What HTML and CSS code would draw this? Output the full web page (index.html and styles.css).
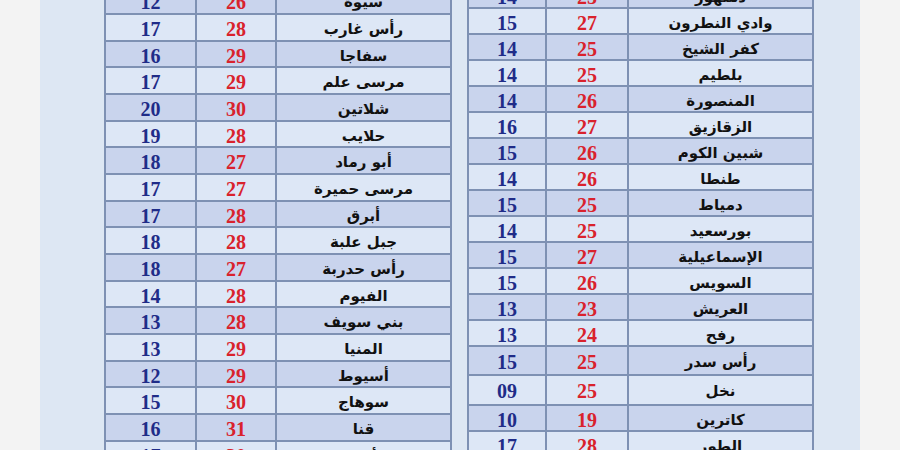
FILE: index.html
```html
<!DOCTYPE html>
<html lang="ar">
<head>
<meta charset="utf-8">
<link rel="stylesheet" href="styles.css">
</head>
<body>
<div class="panel">
  <div class="tbl tbl-left" dir="rtl">
    <div class="row dark"><div class="name">سيوة</div><div class="hi">26</div><div class="lo">12</div></div>
    <div class="row light"><div class="name">رأس غارب</div><div class="hi">28</div><div class="lo">17</div></div>
    <div class="row dark"><div class="name">سفاجا</div><div class="hi">29</div><div class="lo">16</div></div>
    <div class="row light"><div class="name">مرسى علم</div><div class="hi">29</div><div class="lo">17</div></div>
    <div class="row dark"><div class="name">شلاتين</div><div class="hi">30</div><div class="lo">20</div></div>
    <div class="row light"><div class="name">حلايب</div><div class="hi">28</div><div class="lo">19</div></div>
    <div class="row dark"><div class="name">أبو رماد</div><div class="hi">27</div><div class="lo">18</div></div>
    <div class="row light"><div class="name">مرسى حميرة</div><div class="hi">27</div><div class="lo">17</div></div>
    <div class="row dark"><div class="name">أبرق</div><div class="hi">28</div><div class="lo">17</div></div>
    <div class="row light"><div class="name">جبل علبة</div><div class="hi">28</div><div class="lo">18</div></div>
    <div class="row dark"><div class="name">رأس حدربة</div><div class="hi">27</div><div class="lo">18</div></div>
    <div class="row light"><div class="name">الفيوم</div><div class="hi">28</div><div class="lo">14</div></div>
    <div class="row dark"><div class="name">بني سويف</div><div class="hi">28</div><div class="lo">13</div></div>
    <div class="row light"><div class="name">المنيا</div><div class="hi">29</div><div class="lo">13</div></div>
    <div class="row dark"><div class="name">أسيوط</div><div class="hi">29</div><div class="lo">12</div></div>
    <div class="row light"><div class="name">سوهاج</div><div class="hi">30</div><div class="lo">15</div></div>
    <div class="row dark"><div class="name">قنا</div><div class="hi">31</div><div class="lo">16</div></div>
    <div class="row light"><div class="name">الأقصر</div><div class="hi">30</div><div class="lo">17</div></div>
  </div>
  <div class="tbl tbl-right" dir="rtl">
    <div class="row dark"><div class="name">دمنهور</div><div class="hi">25</div><div class="lo">14</div></div>
    <div class="row light"><div class="name">وادي النطرون</div><div class="hi">27</div><div class="lo">15</div></div>
    <div class="row dark"><div class="name">كفر الشيخ</div><div class="hi">25</div><div class="lo">14</div></div>
    <div class="row light"><div class="name">بلطيم</div><div class="hi">25</div><div class="lo">14</div></div>
    <div class="row dark"><div class="name">المنصورة</div><div class="hi">26</div><div class="lo">14</div></div>
    <div class="row light"><div class="name">الزقازيق</div><div class="hi">27</div><div class="lo">16</div></div>
    <div class="row dark"><div class="name">شبين الكوم</div><div class="hi">26</div><div class="lo">15</div></div>
    <div class="row light"><div class="name">طنطا</div><div class="hi">26</div><div class="lo">14</div></div>
    <div class="row dark"><div class="name">دمياط</div><div class="hi">25</div><div class="lo">15</div></div>
    <div class="row light"><div class="name">بورسعيد</div><div class="hi">25</div><div class="lo">14</div></div>
    <div class="row dark"><div class="name">الإسماعيلية</div><div class="hi">27</div><div class="lo">15</div></div>
    <div class="row light"><div class="name">السويس</div><div class="hi">26</div><div class="lo">15</div></div>
    <div class="row dark"><div class="name">العريش</div><div class="hi">23</div><div class="lo">13</div></div>
    <div class="row light"><div class="name">رفح</div><div class="hi">24</div><div class="lo">13</div></div>
    <div class="row dark tall29"><div class="name">رأس سدر</div><div class="hi">25</div><div class="lo">15</div></div>
    <div class="row light tall30"><div class="name">نخل</div><div class="hi">25</div><div class="lo">09</div></div>
    <div class="row dark"><div class="name">كاترين</div><div class="hi">19</div><div class="lo">10</div></div>
    <div class="row light"><div class="name">الطور</div><div class="hi">28</div><div class="lo">17</div></div>
  </div>
</div>
</body>
</html>
```
FILE: styles.css
```css
html, body {
  margin: 0;
  padding: 0;
  background: #f3f3f3;
  height: 450px;
  overflow: hidden;
}

.panel {
  margin-left: 40px;
  width: 820px;
  height: 450px;
  background: #dde7f3;
  display: flex;
  align-items: flex-start;
  gap: 15px;
  padding-left: 64px;
  box-sizing: border-box;
  overflow: hidden;
}

.tbl {
  border-left: 2px solid #7e91b3;
  border-right: 2px solid #7e91b3;
  flex: none;
}

.tbl-left {
  margin-top: -11.67px;
}

.tbl-right {
  margin-top: -17px;
}

.row {
  display: grid;
  box-sizing: border-box;
  border-bottom: 2px solid #7e91b3;
}

.tbl-left .row {
  grid-template-columns: 173px 80px 91px;
  height: 26.67px;
}

.tbl-right .row {
  grid-template-columns: 183px 82px 78px;
  height: 26px;
}

.tbl-right .row.tall29 { height: 29px; }
.tbl-right .row.tall30 { height: 30px; }

.row.light { background: #dde7f6; }
.row.dark { background: #c9d4ed; }

.row > div {
  display: flex;
  align-items: center;
  justify-content: center;
}

.row > div + div {
  border-right: 2px solid #7e91b3;
}

.name {
  font-family: "DejaVu Sans", sans-serif;
  font-weight: bold;
  font-size: 15px;
  color: #111;
  padding-top: 2px;
}

.hi, .lo {
  font-family: "Liberation Serif", serif;
  font-weight: bold;
  font-size: 20px;
  padding-top: 3px;
}

.hi { color: #d9222c; }
.lo { color: #1f2c88; }
```
